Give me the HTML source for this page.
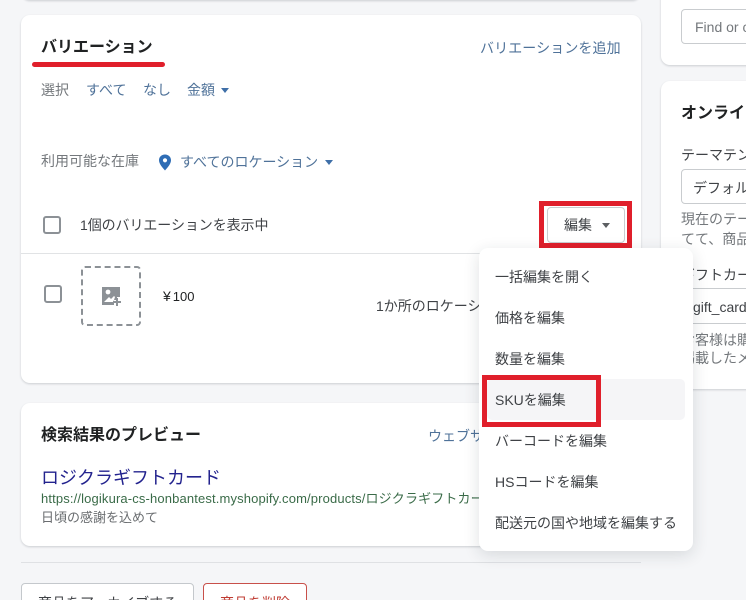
<!DOCTYPE html>
<html lang="ja"><head><meta charset="utf-8"><style>
html,body{margin:0;padding:0;width:746px;height:600px;overflow:hidden}
#p{width:746px;height:600px;overflow:hidden;position:relative;background:#f5f6f8;font-family:"Liberation Sans","Noto Sans CJK JP",sans-serif;font-size:14px;color:#3f4246}
.a{position:absolute;white-space:nowrap;line-height:20px}
.card{position:absolute;background:#fff;border-radius:9px;box-shadow:0 1px 2px rgba(40,50,60,.2)}
.l{color:#4f7299}
.h{font-weight:700;color:#202223;font-size:16px}
.g{color:#74787c}
.cb{position:absolute;width:14px;height:14px;border:2px solid #8c9196;border-radius:3px;background:#fff}
.tri{position:absolute;width:0;height:0;border-left:4px solid transparent;border-right:4px solid transparent;border-top:5px solid #3f6fa8}
.red{position:absolute;border:5px solid #e01f2b;box-sizing:border-box}
.mi{position:absolute;left:495px;white-space:nowrap;line-height:20px;color:#3f4246}
</style></head><body><div id="p">

<div class="card" style="left:21px;top:-40px;width:620px;height:40px"></div>
<div class="card" style="left:661px;top:-20px;width:120px;height:85px"></div>
<div class="a" style="left:681px;top:9px;width:90px;height:33px;border:1px solid #c9cccf;border-radius:4px;background:#fff"></div>
<div class="a g" style="left:695px;top:17px">Find or c</div>

<div class="card" style="left:661px;top:81px;width:120px;height:308px"></div>
<div class="a h" style="left:681px;top:104px">オンライン</div>
<div class="a" style="left:681px;top:145px">テーマテンプレート</div>
<div class="a" style="left:681px;top:169px;width:90px;height:33px;border:1px solid #c9cccf;border-radius:4px;background:#fff"></div>
<div class="a" style="left:693px;top:178px">デフォルト</div>
<div class="a g" style="left:681px;top:209px">現在のテーマ</div>
<div class="a g" style="left:681px;top:229px">てて、商品</div>
<div class="a" style="left:681px;top:265px">ギフトカード</div>
<div class="a" style="left:681px;top:288px;width:90px;height:34px;border:1px solid #c9cccf;background:#fff"></div>
<div class="a" style="left:693px;top:297px">gift_card</div>
<div class="a g" style="left:681px;top:330px">お客様は購</div>
<div class="a g" style="left:681px;top:348px">掲載したメ</div>

<div class="card" style="left:21px;top:15px;width:620px;height:368px"></div>
<div class="a h" style="left:41px;top:38px">バリエーション</div>
<div class="a" style="left:32px;top:62px;width:133px;height:5px;background:#e01f2b;border-radius:3px"></div>
<div class="a l" style="left:480px;top:38px;letter-spacing:.1px">バリエーションを追加</div>
<div class="a g" style="left:41px;top:80px">選択</div>
<div class="a l" style="left:86px;top:80px">すべて</div>
<div class="a l" style="left:143px;top:80px">なし</div>
<div class="a l" style="left:187px;top:80px">金額</div>
<div class="tri" style="left:221px;top:88px"></div>
<div class="a g" style="left:41px;top:151px">利用可能な在庫</div>
<svg class="a" style="left:158px;top:154px" width="14" height="17" viewBox="0 0 14 17"><path fill-rule="evenodd" fill="#2f6db5" d="M7 0.5C3.4 0.5 1 3.1 1 6.3 1 10 4.6 13.8 7 16.5 9.4 13.8 13 10 13 6.3 13 3.1 10.6 0.5 7 0.5ZM7 4.2A2.1 2.1 0 1 1 7 8.4 2.1 2.1 0 0 1 7 4.2Z"/></svg>
<div class="a l" style="left:180px;top:152px">すべてのロケーション</div>
<div class="tri" style="left:325px;top:160px"></div>

<div class="cb" style="left:43px;top:216px"></div>
<div class="a" style="left:80px;top:215px;letter-spacing:-.08px">1個のバリエーションを表示中</div>
<div class="a" style="left:21px;top:253px;width:620px;height:1px;background:#e1e3e5"></div>
<div class="cb" style="left:44px;top:285px"></div>
<div class="a" style="left:81px;top:266px;width:60px;height:60px;box-sizing:border-box;border:2px dashed #8c9196;border-radius:4px"></div>
<svg class="a" style="left:102px;top:287px" width="20" height="19" viewBox="0 0 20 19"><path fill="#8c9196" d="M0 0H18V10H15V13H12V18H0Z"/><circle cx="6" cy="5" r="2.4" fill="#fff"/><path fill="#fff" d="M2 15L7 10 9 12 12 9 13 10 12 13 11 15Z"/><path fill="#8c9196" d="M14 11H16V14H19V16H16V19H14V16H11V14H14Z"/></svg>
<div class="a" style="left:163px;top:286px;font-size:14px;color:#202223">¥<span style="margin-left:2px;font-size:13px">100</span></div>
<div class="a" style="left:376px;top:296px">1か所のロケーション</div>

<div class="a" style="left:547px;top:207px;width:76px;height:34px;background:#fff;border:1px solid #c9cccf;border-radius:4px"></div>
<div class="a" style="left:564px;top:215px">編集</div>
<div class="tri" style="left:602px;top:223px;border-top-color:#5c5f62"></div>
<div class="red" style="left:539px;top:201px;width:93px;height:47px"></div>

<div class="card" style="left:21px;top:403px;width:620px;height:143px"></div>
<div class="a h" style="left:41px;top:426px">検索結果のプレビュー</div>
<div class="a l" style="left:428px;top:426px">ウェブサイトのSEOを編集</div>
<div class="a" style="left:41px;top:467px;font-size:18px;line-height:22px;color:#23238e">ロジクラギフトカード</div>
<div class="a" style="left:41px;top:489px;width:438px;overflow:hidden;font-size:13px;letter-spacing:.14px;color:#3a6b48">https://logikura-cs-honbantest.myshopify.com/products/ロジクラギフトカード</div>
<div class="a" style="left:41px;top:508px;font-size:13px;color:#6a6d70">日頃の感謝を込めて</div>

<div class="a" style="left:21px;top:562px;width:620px;height:1px;background:#dfe1e4"></div>
<div class="a" style="left:21px;top:583px;width:171px;height:40px;background:#fff;border:1px solid #c4c8cc;border-radius:4px"></div>
<div class="a" style="left:38px;top:593px">商品をアーカイブする</div>
<div class="a" style="left:203px;top:583px;width:102px;height:40px;background:#fff;border:1px solid #c8504a;border-radius:4px"></div>
<div class="a" style="left:220px;top:593px;color:#bf3b32">商品を削除</div>

<div class="card" style="left:479px;top:248px;width:214px;height:303px;box-shadow:0 4px 16px rgba(30,40,50,.14)"></div>
<div class="a" style="left:487px;top:379px;width:198px;height:41px;background:#f5f5f7;border-radius:5px"></div>
<div class="mi" style="top:267px">一括編集を開く</div>
<div class="mi" style="top:308px">価格を編集</div>
<div class="mi" style="top:349px">数量を編集</div>
<div class="mi" style="top:390px">SKUを編集</div>
<div class="mi" style="top:431px">バーコードを編集</div>
<div class="mi" style="top:472px">HSコードを編集</div>
<div class="mi" style="top:513px">配送元の国や地域を編集する</div>
<div class="red" style="left:482px;top:375px;width:119px;height:52px"></div>
</div></body></html>
